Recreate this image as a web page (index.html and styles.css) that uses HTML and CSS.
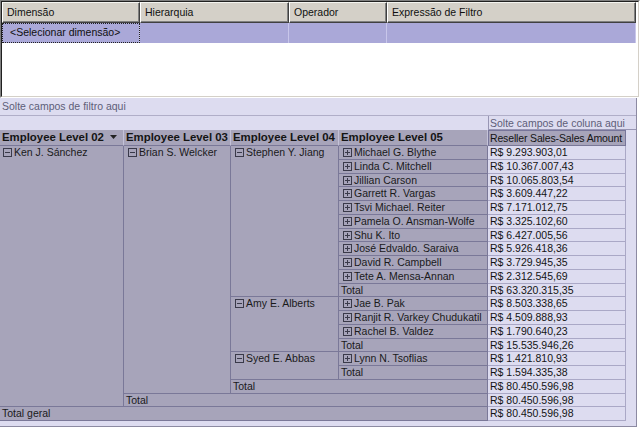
FILE: index.html
```html
<!DOCTYPE html>
<html lang="pt-BR">
<head>
<meta charset="utf-8">
<title>Filtro e tabela dinâmica</title>
<link rel="stylesheet" href="styles.css">
</head>
<body>
<div class="fg">
  <div class="fg-in">
    <div class="fg-head">
      <div class="fh w1">Dimensão</div>
      <div class="fh w2">Hierarquia</div>
      <div class="fh w3">Operador</div>
      <div class="fh w4">Expressão de Filtro</div>
    </div>
    <div class="fg-row">
      <div class="fc w1 focus">&lt;Selecionar dimensão&gt;</div>
      <div class="fc w2"></div>
      <div class="fc w3"></div>
      <div class="fc w4"></div>
    </div>
  </div>
</div>
<div class="pv">
  <div class="drop-filter">Solte campos de filtro aqui</div>
  <div class="drop-row"><div class="drop-col">Solte campos de coluna aqui</div></div>
  <div class="pt">
    <div class="ph">Employee Level 02<svg class="dd" viewBox="0 0 7 4"><path d="M0 0h7L3.5 4z"/></svg></div>
    <div class="ph">Employee Level 03</div>
    <div class="ph">Employee Level 04</div>
    <div class="ph">Employee Level 05</div>
    <div class="ph ph-val">Reseller Sales-Sales Amount</div>

    <div class="rh c1 rs19"><svg class="tg" viewBox="0 0 9 9"><rect x=".5" y=".5" width="8" height="8"/><path d="M2 4.5h5"/></svg>Ken J. Sánchez</div>
    <div class="rh rs18"><svg class="tg" viewBox="0 0 9 9"><rect x=".5" y=".5" width="8" height="8"/><path d="M2 4.5h5"/></svg>Brian S. Welcker</div>
    <div class="rh rs11"><svg class="tg" viewBox="0 0 9 9"><rect x=".5" y=".5" width="8" height="8"/><path d="M2 4.5h5"/></svg>Stephen Y. Jiang</div>
    <div class="rh"><svg class="tg" viewBox="0 0 9 9"><rect x=".5" y=".5" width="8" height="8"/><path d="M2 4.5h5M4.5 2v5"/></svg>Michael G. Blythe</div>
    <div class="v">R$ 9.293.903,01</div>

    <div class="rh"><svg class="tg" viewBox="0 0 9 9"><rect x=".5" y=".5" width="8" height="8"/><path d="M2 4.5h5M4.5 2v5"/></svg>Linda C. Mitchell</div>
    <div class="v">R$ 10.367.007,43</div>

    <div class="rh"><svg class="tg" viewBox="0 0 9 9"><rect x=".5" y=".5" width="8" height="8"/><path d="M2 4.5h5M4.5 2v5"/></svg>Jillian Carson</div>
    <div class="v">R$ 10.065.803,54</div>

    <div class="rh"><svg class="tg" viewBox="0 0 9 9"><rect x=".5" y=".5" width="8" height="8"/><path d="M2 4.5h5M4.5 2v5"/></svg>Garrett R. Vargas</div>
    <div class="v">R$ 3.609.447,22</div>

    <div class="rh"><svg class="tg" viewBox="0 0 9 9"><rect x=".5" y=".5" width="8" height="8"/><path d="M2 4.5h5M4.5 2v5"/></svg>Tsvi Michael. Reiter</div>
    <div class="v">R$ 7.171.012,75</div>

    <div class="rh"><svg class="tg" viewBox="0 0 9 9"><rect x=".5" y=".5" width="8" height="8"/><path d="M2 4.5h5M4.5 2v5"/></svg>Pamela O. Ansman-Wolfe</div>
    <div class="v">R$ 3.325.102,60</div>

    <div class="rh"><svg class="tg" viewBox="0 0 9 9"><rect x=".5" y=".5" width="8" height="8"/><path d="M2 4.5h5M4.5 2v5"/></svg>Shu K. Ito</div>
    <div class="v">R$ 6.427.005,56</div>

    <div class="rh"><svg class="tg" viewBox="0 0 9 9"><rect x=".5" y=".5" width="8" height="8"/><path d="M2 4.5h5M4.5 2v5"/></svg>José Edvaldo. Saraiva</div>
    <div class="v">R$ 5.926.418,36</div>

    <div class="rh"><svg class="tg" viewBox="0 0 9 9"><rect x=".5" y=".5" width="8" height="8"/><path d="M2 4.5h5M4.5 2v5"/></svg>David R. Campbell</div>
    <div class="v">R$ 3.729.945,35</div>

    <div class="rh"><svg class="tg" viewBox="0 0 9 9"><rect x=".5" y=".5" width="8" height="8"/><path d="M2 4.5h5M4.5 2v5"/></svg>Tete A. Mensa-Annan</div>
    <div class="v">R$ 2.312.545,69</div>

    <div class="rh tot">Total</div>
    <div class="v">R$ 63.320.315,35</div>

    <div class="rh rs4"><svg class="tg" viewBox="0 0 9 9"><rect x=".5" y=".5" width="8" height="8"/><path d="M2 4.5h5"/></svg>Amy E. Alberts</div>
    <div class="rh"><svg class="tg" viewBox="0 0 9 9"><rect x=".5" y=".5" width="8" height="8"/><path d="M2 4.5h5M4.5 2v5"/></svg>Jae B. Pak</div>
    <div class="v">R$ 8.503.338,65</div>

    <div class="rh"><svg class="tg" viewBox="0 0 9 9"><rect x=".5" y=".5" width="8" height="8"/><path d="M2 4.5h5M4.5 2v5"/></svg>Ranjit R. Varkey Chudukatil</div>
    <div class="v">R$ 4.509.888,93</div>

    <div class="rh"><svg class="tg" viewBox="0 0 9 9"><rect x=".5" y=".5" width="8" height="8"/><path d="M2 4.5h5M4.5 2v5"/></svg>Rachel B. Valdez</div>
    <div class="v">R$ 1.790.640,23</div>

    <div class="rh tot">Total</div>
    <div class="v">R$ 15.535.946,26</div>

    <div class="rh rs2"><svg class="tg" viewBox="0 0 9 9"><rect x=".5" y=".5" width="8" height="8"/><path d="M2 4.5h5"/></svg>Syed E. Abbas</div>
    <div class="rh"><svg class="tg" viewBox="0 0 9 9"><rect x=".5" y=".5" width="8" height="8"/><path d="M2 4.5h5M4.5 2v5"/></svg>Lynn N. Tsoflias</div>
    <div class="v">R$ 1.421.810,93</div>

    <div class="rh tot">Total</div>
    <div class="v">R$ 1.594.335,38</div>

    <div class="rh tot cs2">Total</div>
    <div class="v">R$ 80.450.596,98</div>

    <div class="rh tot cs3">Total</div>
    <div class="v">R$ 80.450.596,98</div>

    <div class="rh tot cs4">Total geral</div>
    <div class="v">R$ 80.450.596,98</div>
  </div>
</div>
</body>
</html>
```

FILE: styles.css
```css
* { box-sizing: border-box; }
html, body { margin: 0; padding: 0; }
body {
  width: 642px;
  height: 431px;
  overflow: hidden;
  background: #ffffff;
  font-family: "Liberation Sans", Arial, sans-serif;
  font-size: 10.5px;
  color: #000;
}

/* ---------- filter grid ---------- */
.fg {
  width: 640px;
  height: 98px;
  border: 1px solid;
  border-color: #808080 #ffffff #ffffff #808080;
}
.fg-in {
  height: 100%;
  border: 1px solid;
  border-color: #202020 #d4d0c8 #d4d0c8 #202020;
  background: #ffffff;
}
.fg-head, .fg-row { display: flex; }
.fh {
  height: 21px;
  background: #d4d0c8;
  border: 1px solid;
  border-color: #f4f4f0 #404040 #404040 #ffffff;
  box-shadow: inset -1px -1px #808080;
  padding-left: 4px;
  line-height: 19px;
  white-space: nowrap;
  overflow: hidden;
  color: #101010;
}
.w1 { width: 138px; }
.w2 { width: 149px; }
.w3 { width: 98px; }
.w4 { width: 249px; }
.fc {
  height: 20px;
  background: #aaa8d8;
  border-right: 1px solid #c8c6ea;
  line-height: 19px;
  padding-left: 8px;
  white-space: nowrap;
  color: #101010;
}
.focus { outline: 1px dotted #202020; outline-offset: -1px; }

/* ---------- pivot ---------- */
.pv {
  width: 637px;
  height: 329px;
  background: #dddcf0;
  border-right: 1px solid #8c8aa2;
  border-bottom: 1px solid #8c8aa2;
}
.drop-filter {
  height: 18px;
  line-height: 17px;
  padding-left: 2px;
  border-bottom: 1px solid #b0aec8;
  color: #5e5e78;
}
.drop-row {
  height: 14px;
  display: flex;
  justify-content: flex-end;
}
.drop-col {
  width: 148px;
  height: 14px;
  border-left: 1px solid #9896b4;
  border-bottom: 1px solid #9896b4;
  padding-left: 1px;
  line-height: 14px;
  color: #5e5e78;
  white-space: nowrap;
}
.pt {
  display: grid;
  grid-template-columns: 124px 107px 108px 149px 138px;
  grid-template-rows: 16px repeat(20, 13.75px);
  width: 626px;
}
.ph {
  background: #a7a4ba;
  font-weight: bold;
  font-size: 11.4px;
  line-height: 15px;
  padding-left: 2px;
  border-right: 1px solid #c4c2d8;
  border-bottom: 1px solid #7a7898;
  white-space: nowrap;
  overflow: hidden;
  color: #141414;
}
.ph-val {
  font-weight: normal;
  font-size: 10.5px;
  letter-spacing: -0.15px;
  padding-left: 1px;
  border-left: 1px solid #77759a;
  border-top: 1px solid #77759a;
  border-right-color: #77759a;
  line-height: 14px;
}
.dd {
  width: 7px;
  height: 4px;
  margin-left: 6px;
  vertical-align: 2px;
  fill: #222;
}
.rh {
  background: #a7a4ba;
  border-right: 1px solid #7a7898;
  border-bottom: 1px solid #7a7898;
  padding-left: 4px;
  line-height: 13px;
  white-space: nowrap;
  overflow: hidden;
  color: #1a1a1a;
}
.c1 { padding-left: 3px; }
.tot { padding-left: 2px; }
.v {
  background: #dddcf0;
  border-right: 1px solid #aaa8c6;
  border-bottom: 1px solid #aaa8c6;
  padding-left: 2px;
  line-height: 13px;
  white-space: nowrap;
  color: #141414;
}
.rs19 { grid-row: span 19; }
.rs18 { grid-row: span 18; }
.rs11 { grid-row: span 11; }
.rs4 { grid-row: span 4; }
.rs2 { grid-row: span 2; }
.cs2 { grid-column: span 2; }
.cs3 { grid-column: span 3; }
.cs4 { grid-column: span 4; }
.tg {
  width: 9px;
  height: 9px;
  margin-right: 2px;
  vertical-align: -1px;
  fill: none;
  stroke: #3a3a4a;
  stroke-width: 1;
}
```
